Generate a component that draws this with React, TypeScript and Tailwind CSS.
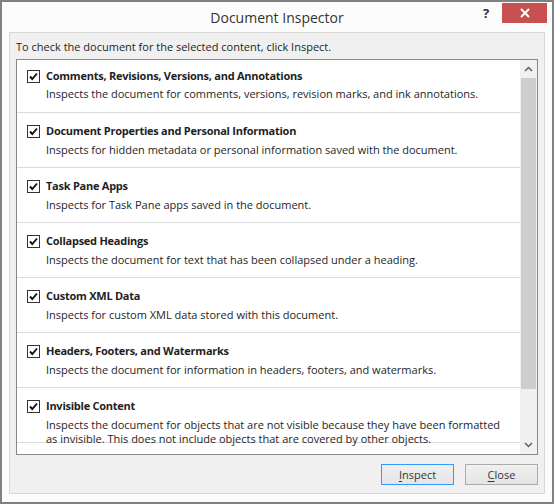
import React from 'react';

interface InspectItem {
  title: string;
  desc: string[];
}

const items: InspectItem[] = [
  {
    title: 'Comments, Revisions, Versions, and Annotations',
    desc: ['Inspects the document for comments, versions, revision marks, and ink annotations.'],
  },
  {
    title: 'Document Properties and Personal Information',
    desc: ['Inspects for hidden metadata or personal information saved with the document.'],
  },
  {
    title: 'Task Pane Apps',
    desc: ['Inspects for Task Pane apps saved in the document.'],
  },
  {
    title: 'Collapsed Headings',
    desc: ['Inspects the document for text that has been collapsed under a heading.'],
  },
  {
    title: 'Custom XML Data',
    desc: ['Inspects for custom XML data stored with this document.'],
  },
  {
    title: 'Headers, Footers, and Watermarks',
    desc: ['Inspects the document for information in headers, footers, and watermarks.'],
  },
  {
    title: 'Invisible Content',
    desc: [
      'Inspects the document for objects that are not visible because they have been formatted',
      'as invisible. This does not include objects that are covered by other objects.',
    ],
  },
];

function CheckBox() {
  return (
    <div className="w-[13px] h-[13px] border border-[#333333] bg-white flex items-center justify-center shrink-0">
      <svg width="9" height="9" viewBox="0 0 9 9">
        <path d="M1 4.5 L3.3 7 L8 1.5" fill="none" stroke="#111" strokeWidth="1.9" />
      </svg>
    </div>
  );
}

function Chevron({ up }: { up?: boolean }) {
  return (
    <svg width="9" height="6" viewBox="0 0 9 6">
      <path
        d={up ? 'M1 5 L4.5 1.5 L8 5' : 'M1 1 L4.5 4.5 L8 1'}
        fill="none"
        stroke="#606060"
        strokeWidth="1.5"
      />
    </svg>
  );
}

export default function App() {
  return (
    <div
      className="w-[554px] h-[504px] border-2 border-[#808080] bg-[#fcfcfc] flex flex-col text-[#1e1e1e]"
      style={{ fontFamily: '"Open Sans", "Noto Sans", sans-serif' }}
    >
      {/* title bar */}
      <div className="h-[30px] flex items-start shrink-0">
        <div className="flex-1 flex justify-center pl-[80px] pt-[6px]">
          <span className="text-[14px] leading-[20px] text-[#333333]">Document Inspector</span>
        </div>
        <div className="flex items-start pr-[5px] pt-[1px]">
          <span className="w-[28px] mr-[2px] pt-[1px] text-center text-[13px] font-bold leading-[18px] text-[#333]">?</span>
          <div className="w-[45px] h-[20px] bg-[#c75050] flex items-center justify-center">
            <svg width="10" height="10" viewBox="0 0 10 10">
              <path d="M1 1 L9 9 M9 1 L1 9" stroke="#fff" strokeWidth="2" />
            </svg>
          </div>
        </div>
      </div>

      {/* client area */}
      <div className="mx-[7px] h-[462px] border border-[#d7d7d7] bg-[#f0f0f0] flex flex-col px-[6px]">
        <div className="h-[26px] pt-[6px] text-[11px] leading-[16px]">
          To check the document for the selected content, click Inspect.
        </div>

        <div className="h-[396px] border border-[#828790] bg-white flex">
          <div className="flex-1 flex flex-col overflow-hidden">
            {items.map((item, i) => (
              <div
                key={item.title}
                className={`shrink-0 border-b border-[#dadada] pl-[10px] ${
                  i === 0 ? 'h-[53px] pt-[8px]' : 'h-[55px] pt-[10px]'
                }`}
              >
                <div className="flex items-center h-[16px]">
                  <CheckBox />
                  <span className="ml-[6px] text-[11px] font-bold leading-[16px] tracking-[-0.25px]">
                    {item.title}
                  </span>
                </div>
                <div className={`${i === 0 ? 'mt-[3px]' : 'mt-[4px]'} ml-[19px] text-[11px] leading-[14px]`}>
                  {item.desc.map((line) => (
                    <div key={line}>{line}</div>
                  ))}
                </div>
              </div>
            ))}
          </div>
          <div className="w-[17px] bg-[#f0f0f0] flex flex-col items-center shrink-0">
            <div className="h-[18px] w-full flex items-center justify-center">
              <Chevron up />
            </div>
            <div className="w-[15px] h-[311px] bg-[#cdcdcd]" />
            <div className="flex-1" />
            <div className="h-[18px] w-full flex items-center justify-center">
              <Chevron />
            </div>
          </div>
        </div>

        <div className="flex justify-end gap-[11px] mt-[9px]">
          <button className="w-[73px] h-[21px] border border-[#3399ff] bg-gradient-to-b from-[#f0f0f0] to-[#e5e5e5] text-[11px] leading-[19px] text-[#333]">
            <span className="underline underline-offset-2">I</span>nspect
          </button>
          <button className="w-[73px] h-[21px] border border-[#acacac] bg-gradient-to-b from-[#f0f0f0] to-[#e5e5e5] text-[11px] leading-[19px] text-[#333]">
            <span className="underline underline-offset-2">C</span>lose
          </button>
        </div>
      </div>
    </div>
  );
}
